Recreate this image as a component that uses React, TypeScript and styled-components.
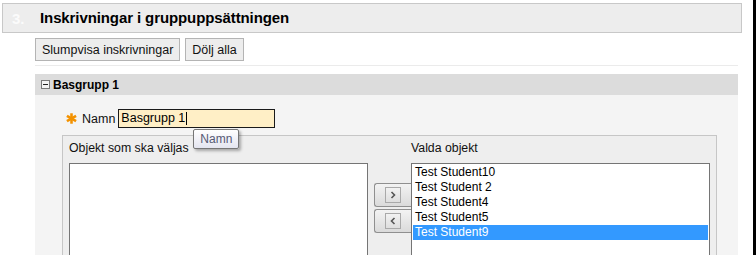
import React from 'react'
import styled, { createGlobalStyle } from 'styled-components'

const GlobalStyle = createGlobalStyle`
  html, body {
    margin: 0;
    padding: 0;
    background: #fff;
    font-family: 'Liberation Sans', Arial, sans-serif;
  }
`

const selected = ['Test Student10', 'Test Student 2', 'Test Student4', 'Test Student5', 'Test Student9']

const App = () => {
  return (
    <Page>
      <GlobalStyle />
      <Main>
        <StepHeader>
          <StepNum>3.</StepNum>
          <StepTitle>Inskrivningar i gruppuppsättningen</StepTitle>
        </StepHeader>
        <Content>
          <ButtonRow>
            <Button>Slumpvisa inskrivningar</Button>
            <Button>Dölj alla</Button>
          </ButtonRow>
          <Divider />
          <GroupHeader>
            <Toggle />
            <GroupTitle>Basgrupp 1</GroupTitle>
          </GroupHeader>
          <Panel>
            <NameRow>
              <Required viewBox='0 0 12 12'>
                <g stroke='#f39200' strokeWidth='2.8' strokeLinecap='butt'>
                  <line x1='6' y1='0.3' x2='6' y2='11.7' />
                  <line x1='1' y1='3.1' x2='11' y2='8.9' />
                  <line x1='1' y1='8.9' x2='11' y2='3.1' />
                </g>
              </Required>
              <NameLabel>Namn</NameLabel>
              <InputWrap>
                <InputBox>
                  Basgrupp 1<Caret />
                </InputBox>
                <Tooltip>Namn</Tooltip>
              </InputWrap>
            </NameRow>
            <PickerBox>
              <Column>
                <ColLabel>Objekt som ska väljas</ColLabel>
                <ListBox />
              </Column>
              <Arrows>
                <ArrowButton>
                  <ArrowFace>
                    <svg width='6' height='8' viewBox='0 0 6 8'>
                      <path d='M1.5 1 L4.5 4 L1.5 7' fill='none' stroke='#555' strokeWidth='1.6' />
                    </svg>
                  </ArrowFace>
                </ArrowButton>
                <ArrowButton>
                  <ArrowFace>
                    <svg width='6' height='8' viewBox='0 0 6 8'>
                      <path d='M4.5 1 L1.5 4 L4.5 7' fill='none' stroke='#555' strokeWidth='1.6' />
                    </svg>
                  </ArrowFace>
                </ArrowButton>
              </Arrows>
              <Column>
                <ColLabel>Valda objekt</ColLabel>
                <ListBox>
                  {selected.map((s, i) => (
                    <ListItem key={s} active={i === selected.length - 1}>{s}</ListItem>
                  ))}
                </ListBox>
              </Column>
            </PickerBox>
          </Panel>
        </Content>
      </Main>
      <BlackEdge />
    </Page>
  )
}

export default App

const Page = styled.div`
  display: flex;
  width: 756px;
  height: 255px;
  overflow: hidden;
`

const Main = styled.div`
  flex: 1;
  padding: 3px 0 0 2px;
`

const BlackEdge = styled.div`
  width: 3px;
  background: #000;
`

const StepHeader = styled.div`
  width: 738px;
  height: 28px;
  border: 1px solid #c8c8c8;
  background: #ededed;
  display: flex;
  align-items: center;
`

const StepNum = styled.span`
  width: 28px;
  padding-left: 9px;
  color: #fbfbfb;
  font-size: 15px;
  font-weight: bold;
`

const StepTitle = styled.span`
  color: #000;
  font-size: 15px;
  font-weight: bold;
  line-height: 28px;
  letter-spacing: -0.1px;
`

const Content = styled.div`
  margin-left: 33px;
  width: 703px;
`

const ButtonRow = styled.div`
  display: flex;
  gap: 5px;
  margin-top: 5px;
`

const Button = styled.button`
  height: 23px;
  padding: 0 6px;
  border: 1px solid #b4b4b4;
  border-radius: 0;
  background: #ededed;
  color: #111;
  font-family: 'Liberation Sans', Arial, sans-serif;
  font-size: 12.5px;
`

const Divider = styled.div`
  margin-top: 4px;
  height: 1px;
  background: #ebebeb;
`

const GroupHeader = styled.div`
  margin-top: 8px;
  height: 21px;
  background: #dcdcdc;
  display: flex;
  align-items: center;
  padding-left: 6px;
  gap: 3px;
`

const Toggle = styled.span`
  position: relative;
  width: 7px;
  height: 7px;
  border: 1px solid #7a7a7a;
  background: #f4f4f4;
  &::after {
    content: '';
    position: absolute;
    left: 1px;
    top: 3px;
    width: 5px;
    height: 1px;
    background: #222;
  }
`

const GroupTitle = styled.span`
  font-size: 12px;
  font-weight: bold;
  color: #000;
`

const Panel = styled.div`
  background: #f4f4f4;
  padding: 14px 0 0 27px;
  height: 200px;
`

const NameRow = styled.div`
  display: flex;
  align-items: center;
  padding-left: 4px;
  height: 19px;
`

const Required = styled.svg`
  width: 11px;
  height: 11px;
  margin-right: 5px;
`

const NameLabel = styled.span`
  font-size: 12.5px;
  color: #111;
  margin-right: 3px;
`

const InputWrap = styled.div`
  position: relative;
`

const InputBox = styled.div`
  box-sizing: border-box;
  width: 157px;
  height: 19px;
  border: 1px solid #1a1a1a;
  background: #ffefc6;
  padding-left: 2px;
  font-size: 12.5px;
  line-height: 17px;
  color: #000;
  display: flex;
  align-items: center;
`

const Caret = styled.span`
  display: inline-block;
  width: 1px;
  height: 13px;
  margin-left: 1px;
  background: #000;
`

const Tooltip = styled.div`
  position: absolute;
  left: 75px;
  top: 20px;
  box-sizing: border-box;
  width: 46px;
  height: 20px;
  border: 1px solid #767676;
  border-radius: 2px;
  background: linear-gradient(#ffffff, #e4e5f0);
  box-shadow: 2px 2px 3px rgba(0, 0, 0, 0.3);
  color: #575a75;
  font-size: 12px;
  line-height: 18px;
  text-align: center;
  z-index: 2;
`

const PickerBox = styled.div`
  box-sizing: border-box;
  margin-top: 7px;
  width: 655px;
  height: 160px;
  border: 1px solid #c6c6c6;
  background: #eeeeee;
  padding: 5px 0 0 6px;
  display: flex;
`

const Column = styled.div`
  display: flex;
  flex-direction: column;
  width: 299px;
`

const ColLabel = styled.div`
  font-size: 12.3px;
  line-height: 15px;
  color: #111;
  margin-bottom: 7px;
`

const ListBox = styled.div`
  box-sizing: border-box;
  width: 299px;
  height: 120px;
  border: 1px solid #757575;
  background: #fff;
  padding: 1px;
`

const ListItem = styled.div<{ active?: boolean }>`
  height: 15px;
  line-height: 15px;
  padding-left: 2px;
  font-size: 12px;
  color: ${({ active }) => (active ? '#fff' : '#000')};
  background: ${({ active }) => (active ? '#3399ff' : 'transparent')};
  white-space: nowrap;
`

const Arrows = styled.div`
  display: flex;
  flex-direction: column;
  gap: 2px;
  padding: 42px 0 0 6px;
  width: 37px;
`

const ArrowButton = styled.div`
  box-sizing: border-box;
  width: 37px;
  height: 24px;
  border: 1px solid #8f8f8f;
  border-right: none;
  border-radius: 3px 0 0 3px;
  background: linear-gradient(#f3f3f3, #dadada);
  display: flex;
  align-items: center;
  justify-content: center;
`

const ArrowFace = styled.div`
  box-sizing: border-box;
  width: 16px;
  height: 16px;
  border: 1px solid #a9a9a9;
  background: linear-gradient(#f2f2f2, #dedede);
  display: flex;
  align-items: center;
  justify-content: center;
`
